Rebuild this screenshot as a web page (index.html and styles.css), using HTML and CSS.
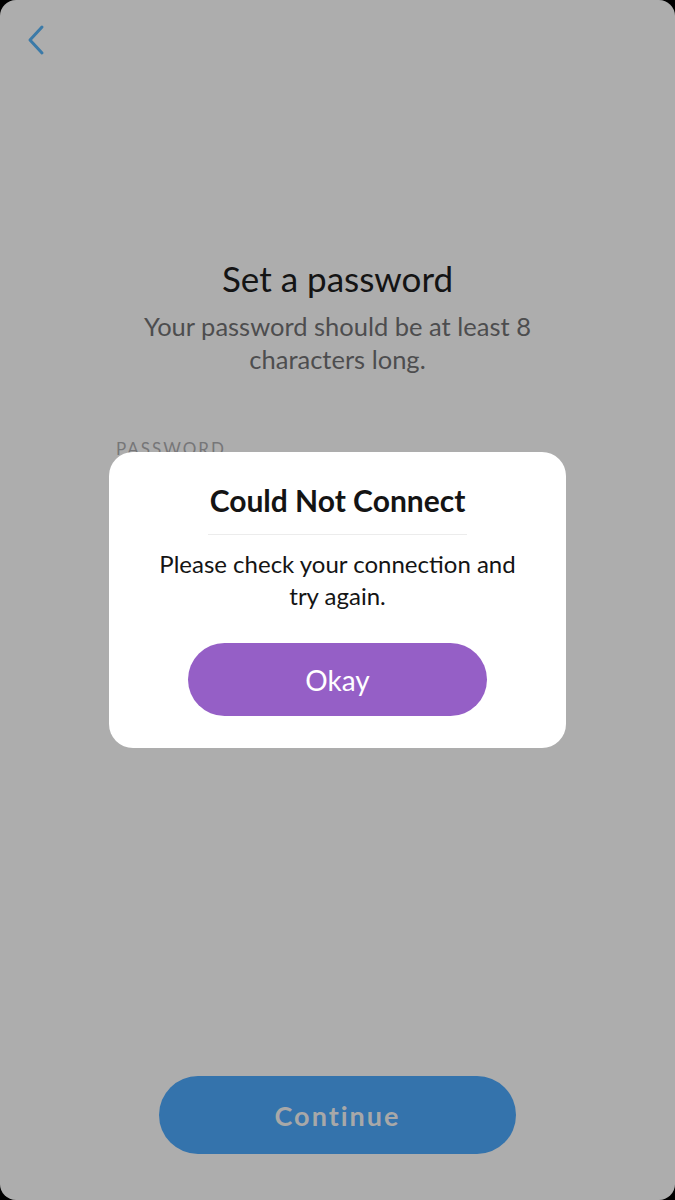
FILE: index.html
```html
<!DOCTYPE html>
<html lang="en">
<head>
  <meta charset="UTF-8" />
  <meta name="viewport" content="width=device-width, initial-scale=1.0"/>
  <title>Set a password</title>
  <link rel="stylesheet" href="styles.css">
</head>
<body>
  <div class="screen">
    <div class="topbar">
      <button class="back" aria-label="Back">
        <svg width="20" height="32" viewBox="0 0 20 32">
          <path d="M16 3 L4 16 L16 29" fill="none" stroke="currentColor" stroke-width="3" stroke-linecap="round" stroke-linejoin="round"/>
        </svg>
      </button>
    </div>

    <div class="content">
      <h1 class="title">Set a password</h1>
      <p class="subtitle">Your password should be at least 8<br>characters long.</p>
      <div class="field">
        <label class="label">PASSWORD</label>
      </div>
    </div>

    <div class="footer">
      <button class="continue">Continue</button>
    </div>

    <div class="overlay">
      <div class="dialog">
        <h2 class="dialog-title">Could Not Connect</h2>
        <p class="dialog-text">Please check your connection and<br>try again.</p>
        <button class="okay">Okay</button>
      </div>
    </div>
  </div>
</body>
</html>
```

FILE: styles.css
```css
* { margin: 0; padding: 0; box-sizing: border-box; }

body {
  background: #000;
  font-family: Lato, "Open Sans", sans-serif;
  width: 675px;
  height: 1200px;
  overflow: hidden;
}

.screen {
  position: relative;
  width: 675px;
  height: 1200px;
  background: #adadad;
  border-radius: 16px;
  display: flex;
  flex-direction: column;
  overflow: hidden;
}

.topbar {
  height: 80px;
  padding: 24px 0 0 24px;
}

.back {
  border: none;
  background: none;
  color: #3b7aa8;
  width: 24px;
  height: 34px;
  cursor: pointer;
}

.content {
  flex: 1;
  display: flex;
  flex-direction: column;
  align-items: center;
  padding-top: 176px;
}

.title {
  font-size: 35px;
  font-weight: 400;
  color: #141414;
  line-height: 44px;
}

.subtitle {
  margin-top: 10px;
  font-size: 25.5px;
  line-height: 33px;
  color: #4d4d4f;
  text-align: center;
}

.field {
  align-self: stretch;
  padding: 62px 0 0 116px;
}

.label {
  font-size: 17px;
  letter-spacing: 2px;
  color: #767678;
}

.footer {
  display: flex;
  justify-content: center;
  padding-bottom: 46px;
}

.continue {
  width: 357px;
  height: 78px;
  border: none;
  border-radius: 39px;
  background: #3473ac;
  color: #a8a8a8;
  font-family: inherit;
  font-size: 27px;
  font-weight: 700;
  letter-spacing: 2px;
}

.overlay {
  position: absolute;
  inset: 0;
  display: flex;
  justify-content: center;
  padding-top: 452px;
}

.dialog {
  width: 457px;
  height: 296px;
  background: #fff;
  border-radius: 24px;
  display: flex;
  flex-direction: column;
  align-items: center;
  padding-top: 30px;
}

.dialog-title {
  font-size: 30px;
  font-weight: 700;
  color: #141414;
  line-height: 36px;
  padding-bottom: 16px;
  width: 259px;
  text-align: center;
  border-bottom: 1px solid #ececec;
}

.dialog-text {
  margin-top: 13px;
  font-size: 24px;
  line-height: 32px;
  color: #141414;
  text-align: center;
}

.okay {
  margin-top: 31px;
  width: 299px;
  height: 73px;
  border: none;
  border-radius: 37px;
  background: #955fc6;
  color: #fff;
  font-family: inherit;
  font-size: 28px;
  cursor: pointer;
}
```
